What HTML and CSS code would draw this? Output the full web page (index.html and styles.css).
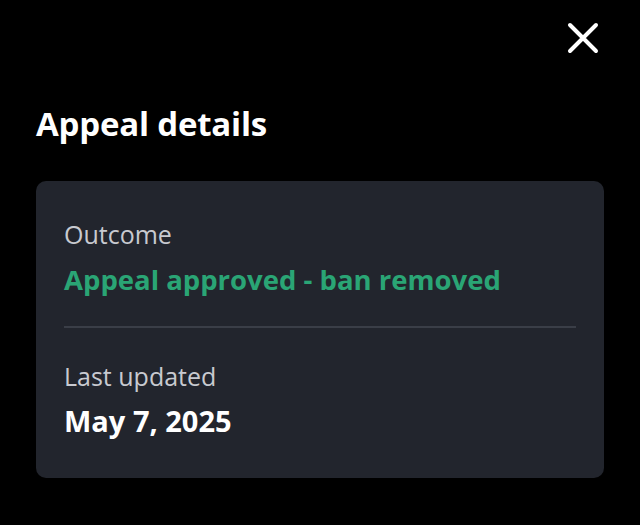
FILE: index.html
```html
<!DOCTYPE html>
<html lang="en">
  <head>
    <meta charset="UTF-8" />
    <meta name="viewport" content="width=device-width, initial-scale=1.0" />
    <title>Appeal details</title>
    <link rel="stylesheet" href="styles.css">
  </head>
  <body>
    <div class="sheet">
      <div class="top-bar">
        <button class="close" aria-label="Close">
          <svg width="32" height="32" viewBox="0 0 32 32">
            <path d="M3 3 L29 29 M29 3 L3 29" stroke="#fff" stroke-width="4" stroke-linecap="round" fill="none" />
          </svg>
        </button>
      </div>

      <h1>Appeal details</h1>

      <div class="card">
        <div class="row">
          <div class="label">Outcome</div>
          <div class="value approved">Appeal approved - ban removed</div>
        </div>
        <div class="divider"></div>
        <div class="row">
          <div class="label">Last updated</div>
          <div class="value date">May 7, 2025</div>
        </div>
      </div>
    </div>
  </body>
</html>
```

FILE: styles.css
```css
body {
  font-family: "Open Sans", "Liberation Sans", sans-serif;
  margin: 0;
  background-color: #000;
  color: #fff;
}
.sheet {
  width: 640px;
  height: 525px;
  padding: 0 36px;
  box-sizing: border-box;
}
.top-bar {
  display: flex;
  justify-content: flex-end;
  padding-top: 20px;
  margin-right: 3px;
}
.close {
  background: none;
  border: none;
  padding: 0;
  width: 36px;
  height: 36px;
  display: flex;
  align-items: center;
  justify-content: center;
  cursor: pointer;
}
h1 {
  font-size: 33px;
  font-weight: 700;
  margin: 48px 0 0;
  line-height: 40px;
  letter-spacing: -0.2px;
}
.card {
  margin-top: 37px;
  background-color: #22252d;
  border-radius: 10px;
  padding: 38px 28px 39px;
}
.label {
  font-size: 25px;
  color: #c8cad0;
  line-height: 30px;
}
.value {
  font-weight: 700;
}
.approved {
  color: #2aa575;
  font-size: 27.5px;
  line-height: 34px;
  margin-top: 14px;
}
.date {
  font-size: 29px;
  line-height: 36px;
  margin-top: 12px;
}
.divider {
  height: 2px;
  background-color: #3a3e47;
  margin: 29px 0 33px;
}
```
